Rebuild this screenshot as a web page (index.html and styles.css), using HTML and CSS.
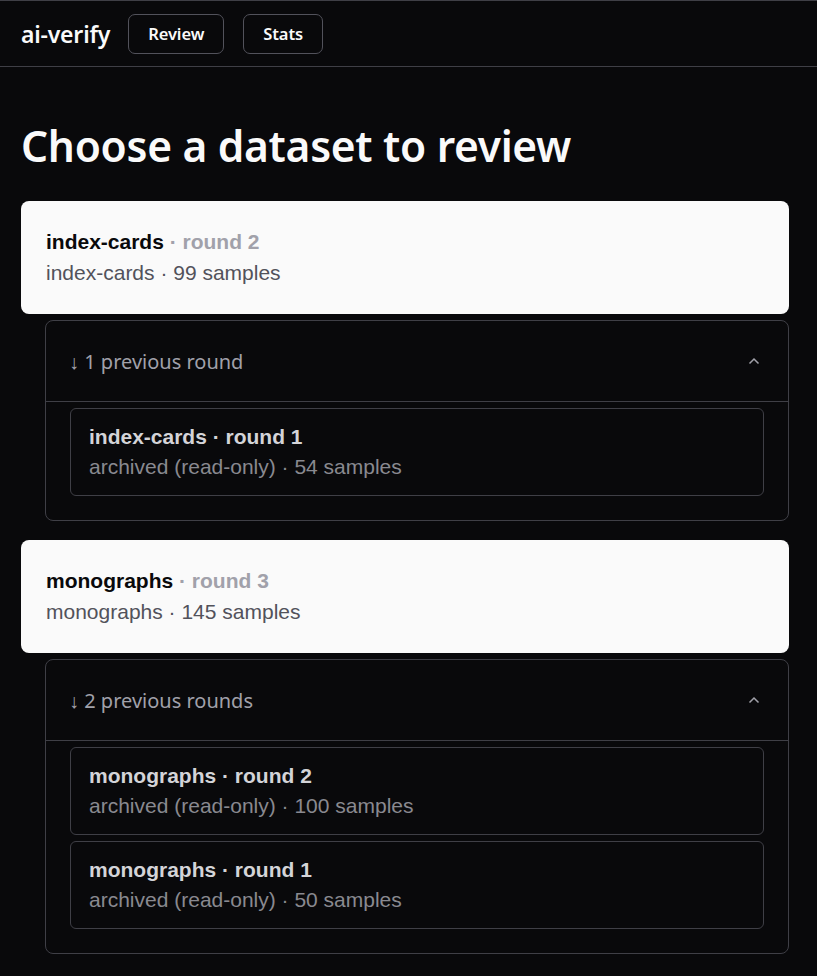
FILE: index.html
```html
<!DOCTYPE html>
<html lang="en">
<head>
<meta charset="utf-8">
<title>ai-verify</title>
<link rel="stylesheet" href="styles.css">
</head>
<body>
<header class="topbar">
  <span class="logo">ai-verify</span>
  <nav class="nav">
    <button class="nav-btn">Review</button>
    <button class="nav-btn">Stats</button>
  </nav>
</header>
<main class="main">
  <h1 class="page-title">Choose a dataset to review</h1>
  <div class="groups">
    <section class="group">
      <div class="card">
        <div class="card-title">index-cards <span class="round">· round 2</span></div>
        <div class="card-sub">index-cards · 99 samples</div>
      </div>
      <div class="accordion">
        <div class="acc-head">
          <span class="acc-label">↓ 1 previous round</span>
          <svg class="chev" width="12" height="8" viewBox="0 0 12 8"><path d="M1.5 6.5 L6 2 L10.5 6.5" fill="none" stroke="currentColor" stroke-width="1.5"/></svg>
        </div>
        <div class="acc-body">
          <div class="old-card">
            <div class="old-title">index-cards · round 1</div>
            <div class="old-sub">archived (read-only) · 54 samples</div>
          </div>
        </div>
      </div>
    </section>
    <section class="group">
      <div class="card">
        <div class="card-title">monographs <span class="round">· round 3</span></div>
        <div class="card-sub">monographs · 145 samples</div>
      </div>
      <div class="accordion">
        <div class="acc-head">
          <span class="acc-label">↓ 2 previous rounds</span>
          <svg class="chev" width="12" height="8" viewBox="0 0 12 8"><path d="M1.5 6.5 L6 2 L10.5 6.5" fill="none" stroke="currentColor" stroke-width="1.5"/></svg>
        </div>
        <div class="acc-body">
          <div class="old-card">
            <div class="old-title">monographs · round 2</div>
            <div class="old-sub">archived (read-only) · 100 samples</div>
          </div>
          <div class="old-card">
            <div class="old-title">monographs · round 1</div>
            <div class="old-sub">archived (read-only) · 50 samples</div>
          </div>
        </div>
      </div>
    </section>
  </div>
</main>
</body>
</html>
```

FILE: styles.css
```css
* { box-sizing: border-box; }
html, body {
  margin: 0;
  padding: 0;
  background: #09090b;
  color: #fafafa;
  font-family: "Noto Sans", "Open Sans", sans-serif;
}
.topbar {
  display: flex;
  align-items: center;
  height: 67px;
  padding: 0 21px;
  border-top: 1px solid #3f3f46;
  border-bottom: 1px solid #3f3f46;
  gap: 18px;
}
.logo {
  font-size: 23px;
  font-weight: 600;
  color: #fafafa;
  letter-spacing: -0.2px;
}
.nav {
  display: flex;
  gap: 19px;
}
.nav-btn {
  height: 40px;
  padding: 0 19px;
  background: transparent;
  color: #fafafa;
  border: 1px solid #52525b;
  border-radius: 7px;
  font-family: "Noto Sans", "Open Sans", sans-serif;
  font-size: 16.5px;
  font-weight: 600;
  letter-spacing: -0.1px;
}
.main {
  padding: 0 28px 0 21px;
}
.page-title {
  margin: 0;
  padding: 54px 0 30px;
  font-size: 42.5px;
  line-height: 50px;
  font-weight: 600;
  letter-spacing: -0.3px;
  color: #fafafa;
}
.groups {
  display: flex;
  flex-direction: column;
  gap: 19px;
}
.group {
  display: flex;
  flex-direction: column;
  gap: 6px;
}
.card {
  background: #fafafa;
  border-radius: 8px;
  padding: 28px 25px 28px;
  font-family: "Liberation Sans", Arial, sans-serif;
  font-size: 21px;
  line-height: 26px;
}
.card-title {
  font-weight: 700;
  color: #09090b;
  margin-bottom: 5px;
}
.round {
  color: #a1a1aa;
}
.card-sub {
  color: #52525b;
}
.accordion {
  margin-left: 24px;
  border: 1px solid #3f3f46;
  border-radius: 8px;
}
.acc-head {
  display: flex;
  align-items: center;
  justify-content: space-between;
  height: 81px;
  padding: 0 28px 0 23px;
  border-bottom: 1px solid #3f3f46;
}
.acc-label {
  font-size: 20px;
  color: #a1a1aa;
}
.chev {
  color: #a1a1aa;
}
.acc-body {
  display: flex;
  flex-direction: column;
  gap: 6px;
  padding: 6px 24px 24px;
}
.old-card {
  border: 1px solid #3f3f46;
  border-radius: 6px;
  padding: 15px 18px 15px;
  font-family: "Liberation Sans", Arial, sans-serif;
  font-size: 21px;
  line-height: 26px;
}
.old-title {
  font-weight: 700;
  color: #d4d4d8;
  margin-bottom: 4px;
}
.old-sub {
  color: #898990;
}
```
